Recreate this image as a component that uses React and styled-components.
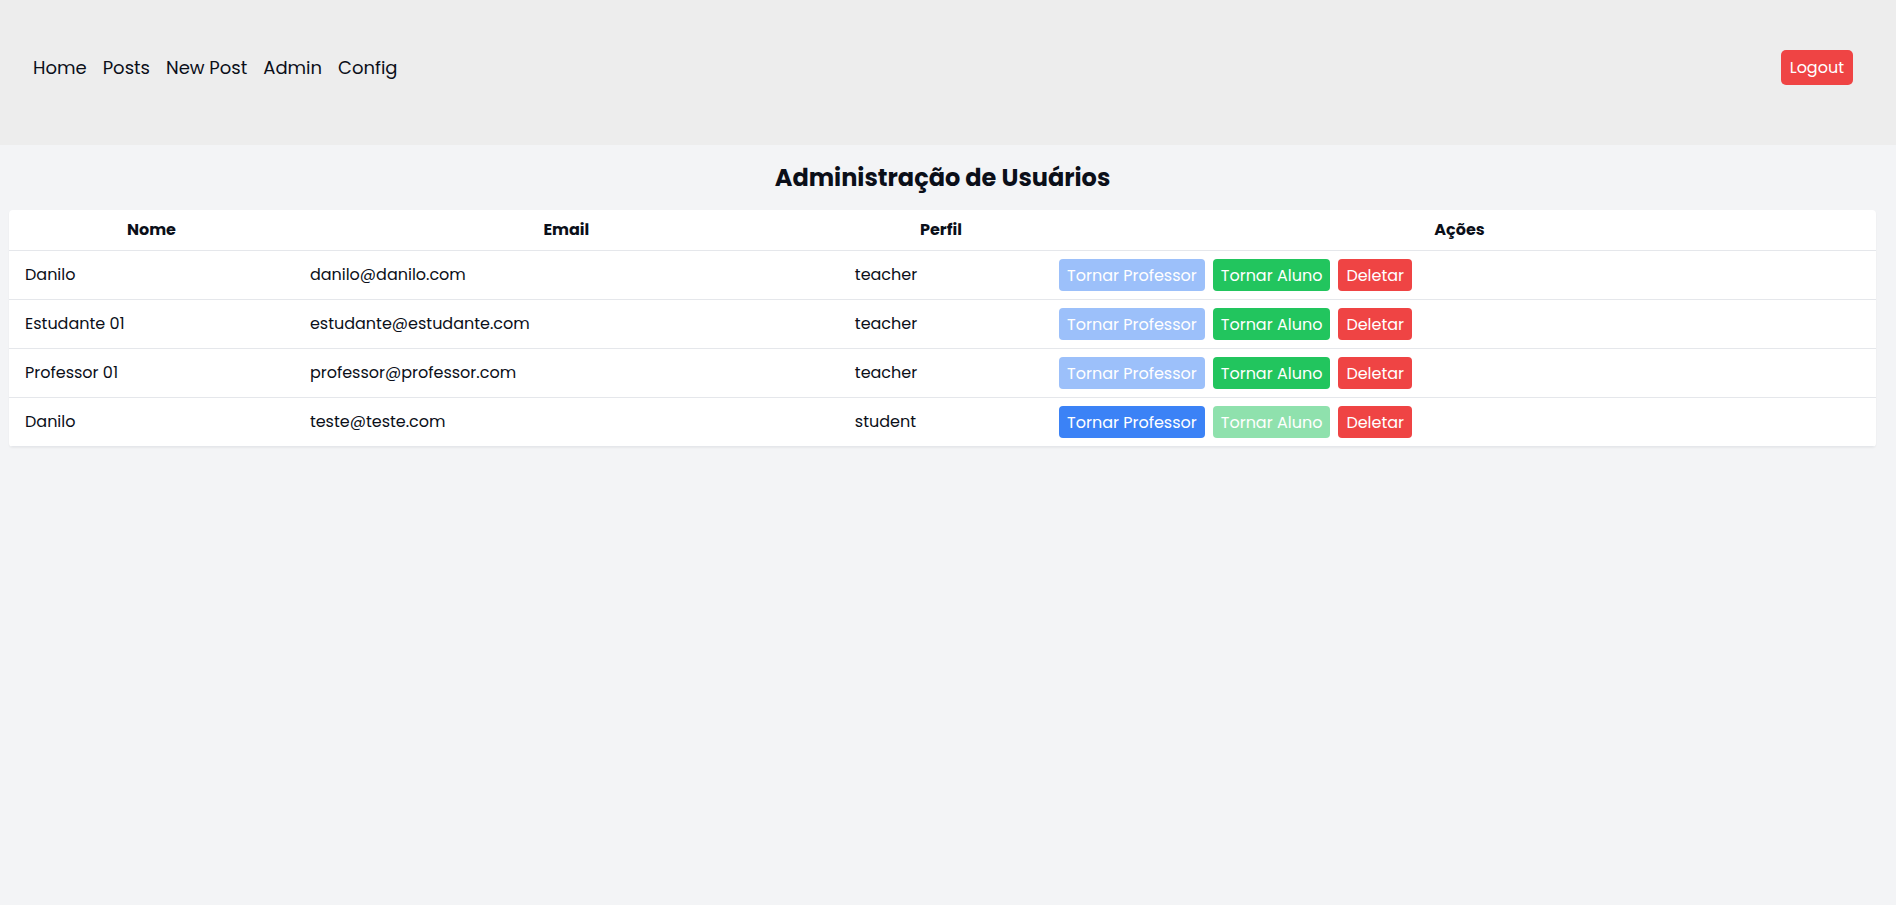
import React, { useState } from 'react';
import styled, { createGlobalStyle } from 'styled-components';

const GlobalStyle = createGlobalStyle`
  * { box-sizing: border-box; }
  html, body {
    margin: 0;
    padding: 0;
    font-family: "Poppins", "DejaVu Sans", sans-serif;
    color: #0b0f19;
    background-color: #f3f4f6;
  }
  ::-webkit-scrollbar {
    width: 3px;
  }
  ::-webkit-scrollbar-track {
    background: #f3f4f6;
  }
  ::-webkit-scrollbar-thumb {
    background: #bdbdbd;
  }
`;

const users = [
  { id: 1, name: 'Danilo', email: 'danilo@danilo.com', role: 'teacher' },
  { id: 2, name: 'Estudante 01', email: 'estudante@estudante.com', role: 'teacher' },
  { id: 3, name: 'Professor 01', email: 'professor@professor.com', role: 'teacher' },
  { id: 4, name: 'Danilo', email: 'teste@teste.com', role: 'student' },
];

const AdminPage = () => {
  const [list] = useState(users);

  return (
    <>
      <GlobalStyle />
      <Header>
        <Nav>
          <NavLink href="#">Home</NavLink>
          <NavLink href="#">Posts</NavLink>
          <NavLink href="#">New Post</NavLink>
          <NavLink href="#">Admin</NavLink>
          <NavLink href="#">Config</NavLink>
        </Nav>
        <LogoutButton>Logout</LogoutButton>
      </Header>

      <Main>
        <Title>Administração de Usuários</Title>
        <Table>
          <thead>
            <tr>
              <Th>Nome</Th>
              <Th>Email</Th>
              <Th>Perfil</Th>
              <Th>Ações</Th>
            </tr>
          </thead>
          <tbody>
            {list.map((user) => (
              <Row key={user.id}>
                <Td>{user.name}</Td>
                <Td>{user.email}</Td>
                <Td>{user.role}</Td>
                <Td>
                  <Actions>
                    <ActionButton $color="#3b82f6" disabled={user.role === 'teacher'}>
                      Tornar Professor
                    </ActionButton>
                    <ActionButton $color="#22c55e" disabled={user.role === 'student'}>
                      Tornar Aluno
                    </ActionButton>
                    <ActionButton $color="#ef4444">Deletar</ActionButton>
                  </Actions>
                </Td>
              </Row>
            ))}
          </tbody>
        </Table>
      </Main>
    </>
  );
};

export default AdminPage;

const Header = styled.header`
  height: 145px;
  background-color: #ededed;
  display: flex;
  justify-content: space-between;
  align-items: flex-start;
  padding: 50px 43px 0 33px;
`;

const Nav = styled.nav`
  display: flex;
  gap: 16px;
  height: 35px;
  align-items: center;
`;

const NavLink = styled.a`
  font-size: 18px;
  color: #0b0f19;
  text-decoration: none;
`;

const LogoutButton = styled.button`
  height: 35px;
  padding: 0 9px;
  background-color: #ef4444;
  color: white;
  font-family: inherit;
  font-size: 16px;
  border: none;
  border-radius: 5px;
  cursor: pointer;
`;

const Main = styled.main`
  min-height: 100vh;
  padding: 17px 20px 16px 9px;
`;

const Title = styled.h1`
  margin: 0 0 16px;
  text-align: center;
  font-size: 24px;
  line-height: 32px;
  font-weight: 700;
`;

const Table = styled.table`
  width: 100%;
  border-collapse: collapse;
  background-color: white;
  border-radius: 4px;
  overflow: hidden;
  box-shadow: 0 1px 2px rgba(0, 0, 0, 0.05);
`;

const Th = styled.th`
  padding: 8px 16px;
  font-size: 16px;
  line-height: 24px;
  font-weight: 700;
  text-align: center;
  border-bottom: 1px solid #e5e7eb;
`;

const Row = styled.tr`
  border-bottom: 1px solid #e5e7eb;
`;

const Td = styled.td`
  padding: 8px 16px;
  font-size: 16px;
  line-height: 24px;
  text-align: left;
`;

const Actions = styled.div`
  display: flex;
  gap: 8px;
`;

const ActionButton = styled.button`
  height: 32px;
  padding: 0 8px;
  background-color: ${(p) => p.$color};
  color: white;
  font-family: inherit;
  font-size: 16px;
  border: none;
  border-radius: 4px;
  cursor: pointer;

  &:disabled {
    opacity: 0.5;
    cursor: not-allowed;
  }
`;
